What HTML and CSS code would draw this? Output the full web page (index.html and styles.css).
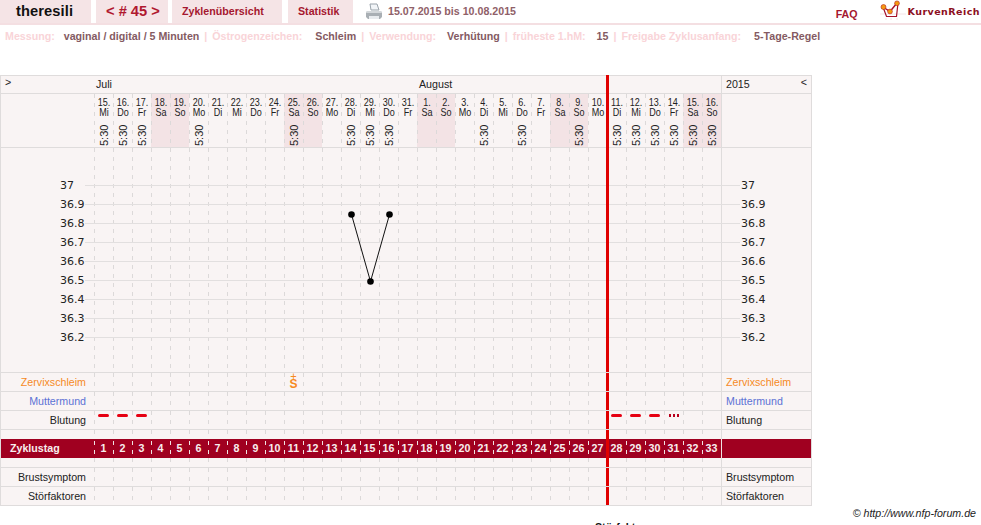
FILE: index.html
```html
<!DOCTYPE html>
<html lang="de">
<head>
<meta charset="utf-8">
<title>theresili – Zyklus 45</title>
<link rel="stylesheet" href="styles.css">
</head>
<body>
<header class="topbar">
  <div class="tab tab-user">theresili</div>
  <div class="tab tab-cycle">&lt; # 45 &gt;</div>
  <a class="tab tab-link tab-over">Zyklenübersicht</a>
  <a class="tab tab-link tab-stat">Statistik</a>
  <svg class="printer" width="18" height="18" viewBox="0 0 18 18">
    <path d="M5 1h7l2 6H6z" fill="#f2f5f8" stroke="#9aa3ab" stroke-width="1"/>
    <path d="M2 8h14l1 2v4l-2 2H3l-2-2v-4z" fill="#a9afb4"/>
    <path d="M2 8h14l1 2H1z" fill="#d3d7da"/>
    <path d="M4 13h10v3H4z" fill="#e8ebee"/>
  </svg>
  <div class="range">15.07.2015 bis 10.08.2015</div>
  <a class="faq">FAQ</a>
  <div class="brand">
    <svg class="logo" width="26" height="20" viewBox="0 0 26 20">
      <path d="M0 14H26M6 18V20M11 18V20M17 18V20" fill="none" stroke="#f5e4e6" stroke-width="1"/>
      <path d="M3 7l3.5 9.5h10L18 3" fill="none" stroke="#a5102a" stroke-width="1.2"/>
      <path d="M3 7l7 4.5L17 3" fill="none" stroke="#a5102a" stroke-width="1.4"/>
      <circle cx="3.5" cy="7" r="2.5" fill="#f39a12" stroke="#b52020" stroke-width=".6"/>
      <circle cx="10" cy="11.5" r="2.4" fill="#f39a12" stroke="#b52020" stroke-width=".6"/>
      <circle cx="17" cy="3.3" r="2.4" fill="#f39a12" stroke="#b52020" stroke-width=".6"/>
    </svg>
    <span class="brand-name">KurvenReich</span>
  </div>
</header>

<div class="meta">
  <span class="k">Messung:</span><span class="v v-n">vaginal / digital / 5 Minuten</span><span class="s">|</span>
  <span class="k">Östrogenzeichen:</span><span class="v v-w">Schleim</span><span class="s">|</span>
  <span class="k">Verwendung:</span><span class="v">Verhütung</span><span class="s">|</span>
  <span class="k">früheste 1.hM:</span><span class="v">15</span><span class="s">|</span>
  <span class="k">Freigabe Zyklusanfang:</span><span class="v v-w">5-Tage-Regel</span>
</div>

<main class="chart">
  <div class="row months">
    <div class="toggle">&gt;</div>
    <div class="month-bar"><span class="m-jul">Juli</span><span class="m-aug">August</span><b class="cut top-cut"></b></div>
    <div class="year"><span>2015</span><span class="year-t">&lt;</span></div>
  </div>

  <div class="row dates">
    <div class="lab"></div>
    <div class="d"><p>15.<br>Mi</p><span>5:30</span></div>
    <div class="d"><p>16.<br>Do</p><span>5:30</span></div>
    <div class="d"><p>17.<br>Fr</p><span>5:30</span></div>
    <div class="d we"><p>18.<br>Sa</p></div>
    <div class="d we"><p>19.<br>So</p></div>
    <div class="d"><p>20.<br>Mo</p><span>5:30</span></div>
    <div class="d"><p>21.<br>Di</p></div>
    <div class="d"><p>22.<br>Mi</p></div>
    <div class="d"><p>23.<br>Do</p></div>
    <div class="d"><p>24.<br>Fr</p></div>
    <div class="d we"><p>25.<br>Sa</p><span>5:30</span></div>
    <div class="d we"><p>26.<br>So</p></div>
    <div class="d"><p>27.<br>Mo</p></div>
    <div class="d"><p>28.<br>Di</p><span>5:30</span></div>
    <div class="d"><p>29.<br>Mi</p><span>5:30</span></div>
    <div class="d"><p>30.<br>Do</p><span>5:30</span></div>
    <div class="d"><p>31.<br>Fr</p></div>
    <div class="d we"><p>1.<br>Sa</p></div>
    <div class="d we"><p>2.<br>So</p></div>
    <div class="d"><p>3.<br>Mo</p></div>
    <div class="d"><p>4.<br>Di</p><span>5:30</span></div>
    <div class="d"><p>5.<br>Mi</p></div>
    <div class="d"><p>6.<br>Do</p><span>5:30</span></div>
    <div class="d"><p>7.<br>Fr</p></div>
    <div class="d we"><p>8.<br>Sa</p></div>
    <div class="d we"><p>9.<br>So</p><span>5:30</span></div>
    <div class="d"><p>10.<br>Mo</p></div>
    <div class="d cut-cell"><p>11.<br>Di</p><span>5:30</span><b class="cut top-cut"></b></div>
    <div class="d"><p>12.<br>Mi</p><span>5:30</span></div>
    <div class="d"><p>13.<br>Do</p><span>5:30</span></div>
    <div class="d"><p>14.<br>Fr</p><span>5:30</span></div>
    <div class="d we"><p>15.<br>Sa</p><span>5:30</span></div>
    <div class="d we"><p>16.<br>So</p><span>5:30</span></div>
    <div class="lab lab-r"></div>
  </div>

  <svg class="plot" width="810" height="224" viewBox="1 148 810 224">
    <g class="vgrid">
      <path d="M94.5 148V372M113.5 148V372M132.5 148V372M151.5 148V372M170.5 148V372M189.5 148V372M208.5 148V372M227.5 148V372M246.5 148V372M265.5 148V372M284.5 148V372M303.5 148V372M322.5 148V372M341.5 148V372M360.5 148V372M379.5 148V372M398.5 148V372M417.5 148V372M436.5 148V372M455.5 148V372M474.5 148V372M493.5 148V372M512.5 148V372M531.5 148V372M550.5 148V372M569.5 148V372M588.5 148V372M626.5 148V372M645.5 148V372M664.5 148V372M683.5 148V372M702.5 148V372"/>
    </g>
    <path class="vline" d="M721.5 148V372"/>
    <g class="hgrid">
      <path d="M85 185.5H740M85 204.5H740M85 223.5H740M85 242.5H740M85 261.5H740M85 280.5H740M85 299.5H740M85 318.5H740M85 337.5H740"/>
    </g>
    <g class="temps">
      <text x="60" y="189">37</text><text x="60" y="208">36.9</text><text x="60" y="227">36.8</text><text x="60" y="246">36.7</text><text x="60" y="265">36.6</text><text x="60" y="284">36.5</text><text x="60" y="303">36.4</text><text x="60" y="322">36.3</text><text x="60" y="341">36.2</text>
      <text x="741" y="189">37</text><text x="741" y="208">36.9</text><text x="741" y="227">36.8</text><text x="741" y="246">36.7</text><text x="741" y="265">36.6</text><text x="741" y="284">36.5</text><text x="741" y="303">36.4</text><text x="741" y="322">36.3</text><text x="741" y="341">36.2</text>
    </g>
    <path class="curve" d="M351.5 214.5L370.5 281.5L389.5 214.5"/>
    <circle class="pt" cx="351.5" cy="214.5" r="3.3"/>
    <circle class="pt" cx="370.5" cy="281.5" r="3.3"/>
    <circle class="pt" cx="389.5" cy="214.5" r="3.3"/>
    <rect class="red" x="606" y="148" width="3" height="224"/>
  </svg>

  <div class="row"><div class="lab c-or">Zervixschleim</div><i></i><i></i><i></i><i></i><i></i><i></i><i></i><i></i><i></i><i></i><i class="mark"><u>+</u><s>S</s></i><i></i><i></i><i></i><i></i><i></i><i></i><i></i><i></i><i></i><i></i><i></i><i></i><i></i><i></i><i></i><i></i><i class="cut-cell"><b class="cut"></b></i><i></i><i></i><i></i><i></i><i></i><div class="lab lab-r c-or">Zervixschleim</div></div>
  <div class="row"><div class="lab c-bl">Muttermund</div><i></i><i></i><i></i><i></i><i></i><i></i><i></i><i></i><i></i><i></i><i></i><i></i><i></i><i></i><i></i><i></i><i></i><i></i><i></i><i></i><i></i><i></i><i></i><i></i><i></i><i></i><i></i><i class="cut-cell"><b class="cut"></b></i><i></i><i></i><i></i><i></i><i></i><div class="lab lab-r c-bl">Muttermund</div></div>
  <div class="row"><div class="lab">Blutung</div><i><em class="bleed"></em></i><i><em class="bleed"></em></i><i><em class="bleed"></em></i><i></i><i></i><i></i><i></i><i></i><i></i><i></i><i></i><i></i><i></i><i></i><i></i><i></i><i></i><i></i><i></i><i></i><i></i><i></i><i></i><i></i><i></i><i></i><i></i><i class="cut-cell"><b class="cut"></b><em class="bleed"></em></i><i><em class="bleed"></em></i><i><em class="bleed"></em></i><i><em class="spot"></em></i><i></i><i></i><div class="lab lab-r">Blutung</div></div>
  <div class="row short"><div class="lab"></div><i></i><i></i><i></i><i></i><i></i><i></i><i></i><i></i><i></i><i></i><i></i><i></i><i></i><i></i><i></i><i></i><i></i><i></i><i></i><i></i><i></i><i></i><i></i><i></i><i></i><i></i><i></i><i class="cut-cell"><b class="cut"></b></i><i></i><i></i><i></i><i></i><i></i><div class="lab lab-r"></div></div>

  <div class="row band"><div class="lab-band">Zyklustag</div><i>1</i><i>2</i><i>3</i><i>4</i><i>5</i><i>6</i><i>7</i><i>8</i><i>9</i><i>10</i><i>11</i><i>12</i><i>13</i><i>14</i><i>15</i><i>16</i><i>17</i><i>18</i><i>19</i><i>20</i><i>21</i><i>22</i><i>23</i><i>24</i><i>25</i><i>26</i><i>27</i><i class="cut-cell"><b class="cut"></b>28</i><i>29</i><i>30</i><i>31</i><i>32</i><i>33</i><div class="band-end"></div></div>

  <div class="row thin"><div class="lab"></div><i></i><i></i><i></i><i></i><i></i><i></i><i></i><i></i><i></i><i></i><i></i><i></i><i></i><i></i><i></i><i></i><i></i><i></i><i></i><i></i><i></i><i></i><i></i><i></i><i></i><i></i><i></i><i class="cut-cell"><b class="cut"></b></i><i></i><i></i><i></i><i></i><i></i><div class="lab lab-r"></div></div>
  <div class="row"><div class="lab">Brustsymptom</div><i></i><i></i><i></i><i></i><i></i><i></i><i></i><i></i><i></i><i></i><i></i><i></i><i></i><i></i><i></i><i></i><i></i><i></i><i></i><i></i><i></i><i></i><i></i><i></i><i></i><i></i><i></i><i class="cut-cell"><b class="cut"></b></i><i></i><i></i><i></i><i></i><i></i><div class="lab lab-r">Brustsymptom</div></div>
  <div class="row"><div class="lab">Störfaktoren</div><i></i><i></i><i></i><i></i><i></i><i></i><i></i><i></i><i></i><i></i><i></i><i></i><i></i><i></i><i></i><i></i><i></i><i></i><i></i><i></i><i></i><i></i><i></i><i></i><i></i><i></i><i></i><i class="cut-cell"><b class="cut"></b></i><i></i><i></i><i></i><i></i><i></i><div class="lab lab-r">Störfaktoren</div></div>
</main>

<footer class="foot">
  <div class="copy">© http://www.nfp-forum.de</div>
  <div class="below">Störfaktoren</div>
</footer>
</body>
</html>
```
FILE: styles.css
```css
* { box-sizing: border-box; }
html, body { margin: 0; padding: 0; height: 525px; overflow: hidden; background: #fff; }
body { font: 10.67px/1 "Liberation Sans", Arial, sans-serif; color: #222; }

.topbar { display: flex; align-items: stretch; height: 25px; border-bottom: 2px solid #f4dfe2; position: relative; }
.tab { background: #f5e4e6; font-weight: bold; display: flex; align-items: center; color: #a5172f; font-size: 10.67px; white-space: nowrap; }
.tab-user { width: 91px; padding-left: 16px; font-size: 14.67px; color: #111; letter-spacing: .1px; margin-right: 5px; }
.tab-cycle { width: 72px; padding-left: 10px; font-size: 14.67px; color: #b0182f; margin-right: 4px; }
.tab-over { width: 110px; padding-left: 10px; margin-right: 6px; }
.tab-stat { width: 65px; padding-left: 10px; margin-right: 12px; }
.printer { margin-top: 3px; }
.range { margin-left: 5px; font-size: 10.67px; font-weight: bold; color: #8f6068; align-self: center; }
.faq { margin-left: auto; margin-top: 9px; font-size: 10.67px; font-weight: bold; color: #a5172f; }
.brand { display: flex; align-items: flex-start; margin-left: 22px; }
.brand-name { font: bold 9.5px "DejaVu Sans", sans-serif; letter-spacing: .45px; color: #8c0f22; margin: 6px 1px 0 2px; white-space: nowrap; }

.meta { display: flex; height: 50px; padding: 6px 0 0 5px; font-size: 10.67px; font-weight: bold; white-space: nowrap; }
.k { color: #f9d4d8; }
.v { color: #845a62; margin-left: 11px; }
.v-n { margin-left: 9px; }
.v-w { margin-left: 13px; }
.s { color: #f9d4d8; margin: 0 5px; }

.chart { position: relative; width: 812px; background: #f9f4f4; border: 1px solid #dfdcdc; }
.row { display: grid; grid-template-columns: 93px repeat(33, 19px) 90px; height: 19px; border-bottom: 1px solid #dfdcdc; }
.row > i { position: relative; font-style: normal; background: linear-gradient(#dcd9d9 4px, transparent 4px) left top / 1px 9px repeat-y; }
.row:last-child { height: 18px; border-bottom: 0; }

.months { display: grid; grid-template-columns: 93px 627px 90px; height: 18px; }
.toggle { padding: 1px 0 0 4px; }
.month-bar { position: relative; }
.m-jul { position: absolute; left: 2px; top: 3px; }
.m-aug { position: absolute; left: 325px; top: 3px; }
.year { display: flex; justify-content: space-between; padding: 3px 4px 0 4px; border-left: 1px solid #dfdcdc; }
.year-t { margin-top: -2px; }

.dates { height: 54px; }
.d { position: relative; text-align: center; background: linear-gradient(#dcd9d9 4px, transparent 4px) left top / 1px 9px repeat-y; font-size: 11px; }
.d.we { background: linear-gradient(#dcd9d9 4px, transparent 4px) left top / 1px 9px repeat-y, #f3e3e5; }
.d p { margin: 3px 0 0 1px; line-height: 10px; transform: scaleX(.82); }
.d span { position: absolute; left: 5px; top: 30px; height: 22px; writing-mode: vertical-rl; transform: rotate(180deg); font-size: 11px; line-height: 11px; }
.lab { display: flex; align-items: center; justify-content: flex-end; padding: 1px 8px 0 0; }
.lab-r { justify-content: flex-start; padding: 1px 0 0 4px; border-left: 1px solid #dfdcdc; }
.c-or { color: #f68a1f; }
.c-bl { color: #5c72d4; }

.plot { display: block; border-bottom: 1px solid #dfdcdc; height: 225px; }
.vgrid path { stroke: #dcd9d9; stroke-width: 1; stroke-dasharray: 4 5; fill: none; }
.vline { stroke: #dfdcdc; stroke-width: 1; fill: none; }
.hgrid path { stroke: #e2dfdf; stroke-width: 1; fill: none; }
.temps text { font: 11px "DejaVu Sans", sans-serif; fill: #222; }
.curve { stroke: #111; stroke-width: 1; fill: none; }
.pt { fill: #000; }
.red { fill: #e00000; }

.cut-cell { position: relative; }
.cut { position: absolute; left: -1px; top: 0; bottom: 0; width: 3px; background: #e00000; }
.top-cut { bottom: -1px; }
.month-bar .top-cut { left: 512px; top: -1px; }

.bleed { display: block; width: 11px; height: 3px; margin: 3px 0 0 4px; border-radius: 2px; background: #e60012; }
.spot { display: block; width: 12px; height: 3px; margin: 3px 0 0 4px; background: radial-gradient(circle, #b8001c 1.2px, transparent 1.4px) left / 4px 3px repeat-x; }
.mark { color: #f68a1f; text-align: center; font-size: 11px; }
.mark u { display: block; text-decoration: none; height: 6px; line-height: 6px; margin-bottom: 1px; }
.mark s { display: block; text-decoration: none; font-weight: bold; font-size: 12px; line-height: 9px; height: 9px; }

.short { height: 9px; border-bottom: 0; }
.band { height: 19px; border-bottom: 0; background: #a00020; color: #fff; }
.band > i { text-align: center; font-weight: bold; font-size: 10.67px; line-height: 19px; color: #f8eeee; background: linear-gradient(#f0e3e3 4px, transparent 4px) left 2px / 1px 9px repeat-y; }
.lab-band { color: #f8eeee; font-weight: bold; font-size: 10.67px; line-height: 19px; padding-left: 9px; }
.band-end { border-left: 1px solid #f0e3e3; }
.thin { height: 10px; }

.foot { position: relative; width: 981px; height: 19px; }
.copy { text-align: right; padding: 2px 5px 0 0; font-size: 10.67px; font-style: italic; color: #222; }
.below { padding: 3px 0 0 595px; font-size: 10.67px; font-weight: bold; color: #111; }
```
